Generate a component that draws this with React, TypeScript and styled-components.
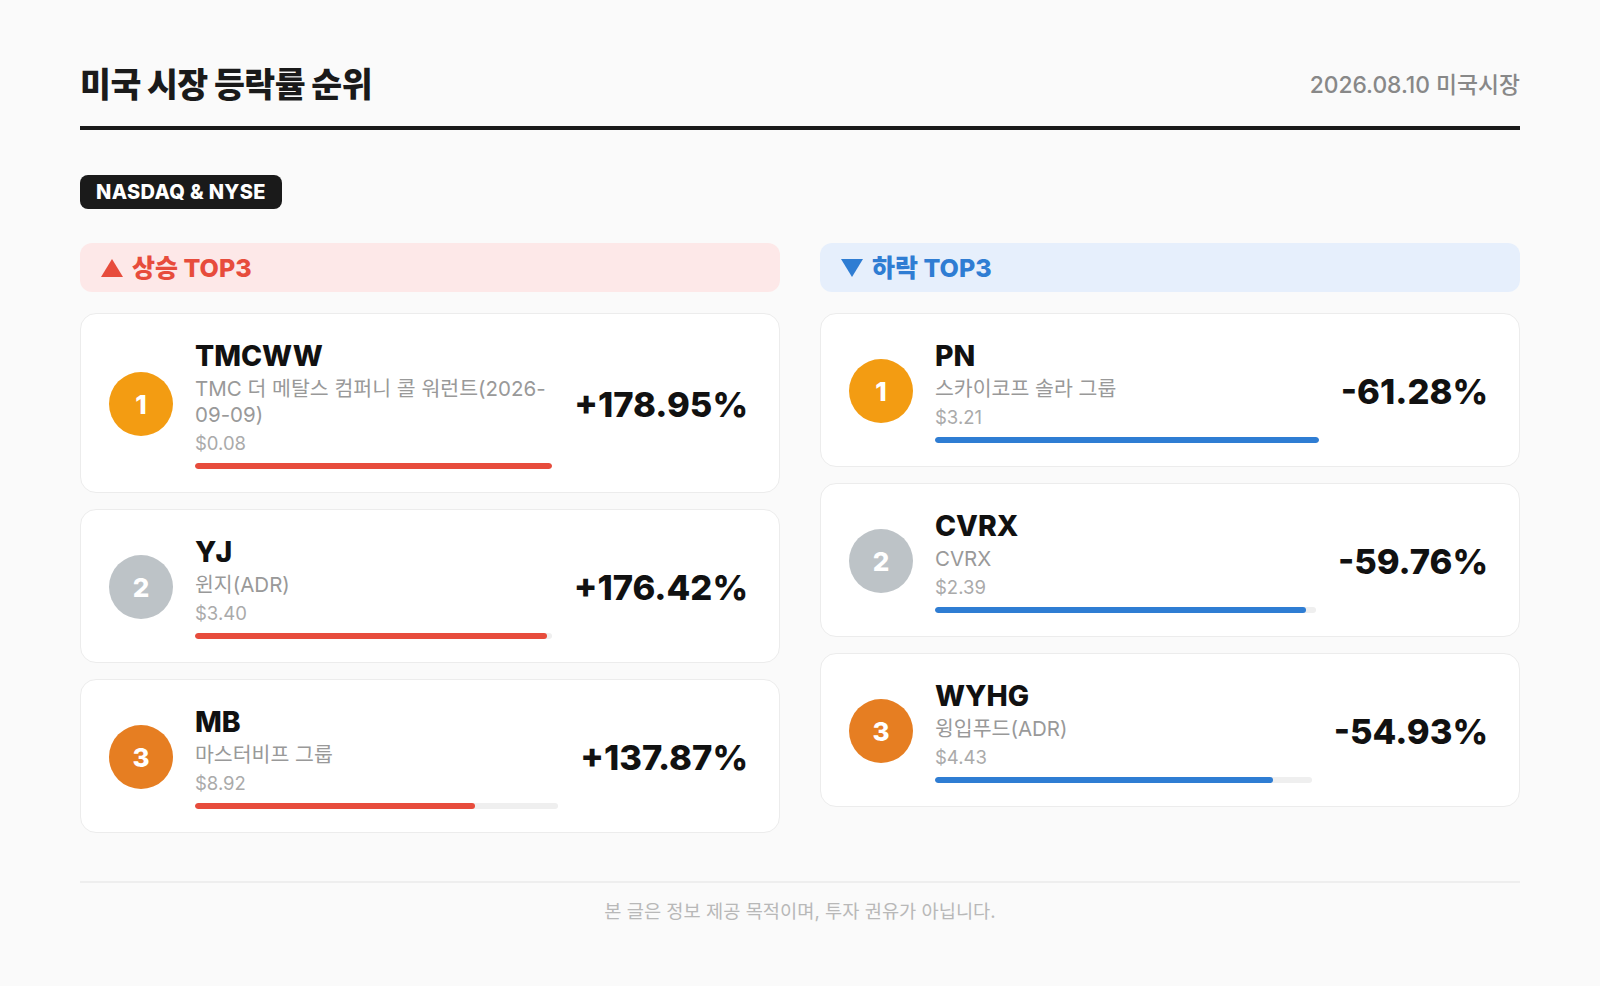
import React from "react";
import styled, { createGlobalStyle } from "styled-components";

const GlobalStyle = createGlobalStyle`
  html, body { margin: 0; padding: 0; background: #fafafa; }
  body {
    font-family: Inter, "Noto Sans CJK KR", "Noto Sans", sans-serif;
    color: #111;
    -webkit-font-smoothing: antialiased;
  }
  * { box-sizing: border-box; }
`;

const Page = styled.div`
  width: 1600px;
  min-height: 986px;
  padding: 63px 80px 40px;
  background: #fafafa;
`;

const Header = styled.header`
  display: flex;
  justify-content: space-between;
  align-items: center;
  padding-bottom: 19px;
  border-bottom: 4px solid #1a1a1a;
`;

const Title = styled.h1`
  margin: 0;
  font-size: 33.6px;
  line-height: 44px;
  font-weight: 900;
  letter-spacing: -0.5px;
  color: #1a1a1a;
`;

const DateText = styled.div`
  font-size: 22.8px;
  line-height: 30px;
  font-weight: 500;
  color: #888;
`;

const Badge = styled.div`
  display: inline-block;
  margin-top: 45px;
  padding: 6px 16px;
  background: #1a1a1a;
  color: #fff;
  border-radius: 8px;
  font-size: 20px;
  line-height: 22px;
  font-weight: 800;
  letter-spacing: 0.35px;
`;

const Columns = styled.div`
  margin-top: 34px;
  display: grid;
  grid-template-columns: 1fr 1fr;
  gap: 40px;
  align-items: start;
`;

const Column = styled.section`
  display: flex;
  flex-direction: column;
`;

const SectionHead = styled.div<{ $tone: "up" | "down" }>`
  height: 49px;
  display: flex;
  align-items: center;
  gap: 8px;
  padding: 0 20px;
  border-radius: 12px;
  background: ${(p) => (p.$tone === "up" ? "#fde8e8" : "#e6effc")};
  color: ${(p) => (p.$tone === "up" ? "#e74c3c" : "#2f7dd3")};
  font-size: 25px;
  line-height: 30px;
  font-weight: 800;
`;

const Arrow = styled.svg`
  width: 24px;
  height: 20px;
  flex: none;
`;

const CardList = styled.div`
  margin-top: 21px;
  display: flex;
  flex-direction: column;
  gap: 16px;
`;

const Card = styled.div`
  display: flex;
  align-items: center;
  gap: 22px;
  padding: 25px 31px 23px 28px;
  background: #fff;
  border: 1px solid #ececec;
  border-radius: 16px;
`;

const RankCircle = styled.div<{ $color: string }>`
  width: 64px;
  height: 64px;
  flex: none;
  border-radius: 50%;
  background: ${(p) => p.$color};
  color: #fff;
  display: flex;
  align-items: center;
  justify-content: center;
  font-size: 26px;
  font-weight: 800;
`;

const Info = styled.div`
  flex: 1;
  min-width: 0;
  display: flex;
  flex-direction: column;
`;

const Ticker = styled.div`
  font-size: 28.4px;
  line-height: 34px;
  font-weight: 800;
  color: #111;
`;

const Name = styled.div`
  margin-top: 3px;
  font-size: 20.5px;
  line-height: 26px;
  color: #999;
`;

const Price = styled.div`
  margin-top: 3px;
  font-size: 18.5px;
  line-height: 25px;
  color: #aaa;
`;

const Track = styled.div`
  margin-top: 7px;
  height: 6px;
  border-radius: 3px;
  background: #efefef;
  overflow: hidden;
`;

const Fill = styled.div<{ $tone: "up" | "down" }>`
  height: 100%;
  border-radius: 3px;
  background: ${(p) => (p.$tone === "up" ? "#e74c3c" : "#2f7dd3")};
`;

const Change = styled.div`
  flex: none;
  font-size: 34.6px;
  line-height: 42px;
  font-weight: 800;
  color: #111;
`;

const Footer = styled.footer`
  margin-top: 48px;
  border-top: 2px solid #eeeeee;
  padding-top: 17px;
  text-align: center;
  font-size: 18.7px;
  line-height: 24px;
  color: #b8b8b8;
`;

type Item = { ticker: string; name: string; price: string; change: number };

const rankColors = ["#f39c12", "#bdc3c7", "#e67e22"];

const gainers: Item[] = [
  { ticker: "TMCWW", name: "TMC 더 메탈스 컴퍼니 콜 워런트(2026-09-09)", price: "$0.08", change: 178.95 },
  { ticker: "YJ", name: "윈지(ADR)", price: "$3.40", change: 176.42 },
  { ticker: "MB", name: "마스터비프 그룹", price: "$8.92", change: 137.87 },
];

const losers: Item[] = [
  { ticker: "PN", name: "스카이코프 솔라 그룹", price: "$3.21", change: -61.28 },
  { ticker: "CVRX", name: "CVRX", price: "$2.39", change: -59.76 },
  { ticker: "WYHG", name: "윙입푸드(ADR)", price: "$4.43", change: -54.93 },
];

function RankList({ items, tone }: { items: Item[]; tone: "up" | "down" }) {
  const max = Math.max(...items.map((i) => Math.abs(i.change)));
  return (
    <CardList>
      {items.map((it, idx) => (
        <Card key={it.ticker}>
          <RankCircle $color={rankColors[idx]}>{idx + 1}</RankCircle>
          <Info>
            <Ticker>{it.ticker}</Ticker>
            <Name>{it.name}</Name>
            <Price>{it.price}</Price>
            <Track>
              <Fill $tone={tone} style={{ width: `${(Math.abs(it.change) / max) * 100}%` }} />
            </Track>
          </Info>
          <Change>
            {it.change > 0 ? "+" : ""}
            {it.change.toFixed(2)}%
          </Change>
        </Card>
      ))}
    </CardList>
  );
}

export default function App() {
  return (
    <>
      <GlobalStyle />
      <Page>
        <Header>
          <Title>미국 시장 등락률 순위</Title>
          <DateText>2026.08.10 미국시장</DateText>
        </Header>
        <Badge>NASDAQ &amp; NYSE</Badge>
        <Columns>
          <Column>
            <SectionHead $tone="up">
              <Arrow viewBox="0 0 24 20">
                <polygon points="12,1 23,19 1,19" fill="currentColor" />
              </Arrow>
              상승 TOP3
            </SectionHead>
            <RankList items={gainers} tone="up" />
          </Column>
          <Column>
            <SectionHead $tone="down">
              <Arrow viewBox="0 0 24 20">
                <polygon points="1,1 23,1 12,19" fill="currentColor" />
              </Arrow>
              하락 TOP3
            </SectionHead>
            <RankList items={losers} tone="down" />
          </Column>
        </Columns>
        <Footer>본 글은 정보 제공 목적이며, 투자 권유가 아닙니다.</Footer>
      </Page>
    </>
  );
}
